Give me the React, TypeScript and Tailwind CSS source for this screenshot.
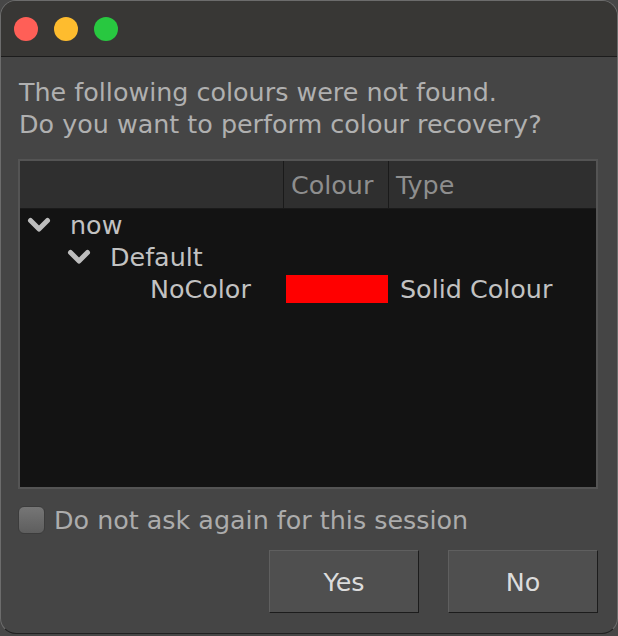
import React from "react";

// Dialog rows: tree of palettes -> pages -> missing colours
type Row = {
  level: number;
  label: string;
  expandable?: boolean;
  colour?: string;
  type?: string;
};

const rows: Row[] = [
  { level: 0, label: "now", expandable: true },
  { level: 1, label: "Default", expandable: true },
  { level: 2, label: "NoColor", colour: "#ff0000", type: "Solid Colour" },
];

function Chevron() {
  return (
    <svg width="24" height="16" viewBox="0 0 24 16" className="shrink-0">
      <polyline
        points="3.5,3.5 12,12 20.5,3.5"
        fill="none"
        stroke="#bdbdbd"
        strokeWidth="5"
        strokeLinecap="round"
        strokeLinejoin="round"
      />
    </svg>
  );
}

export default function App() {
  return (
    <div
      className="w-[618px] h-[636px] bg-[#474747] text-[25.4px] leading-[32px]"
      style={{ fontFamily: '"DejaVu Sans", "Liberation Sans", sans-serif' }}
    >
      <div className="h-[634px] rounded-[16px] border border-[#6c6c6c] border-b-[#202020] overflow-hidden flex flex-col bg-[#454545]">
        {/* title bar */}
        <div className="h-[56px] shrink-0 bg-[#383735] border-b border-[#1c1c1c] flex items-center gap-[16px] pl-[13px]">
          <span className="w-[24px] h-[24px] rounded-full bg-[#ff5f57]" />
          <span className="w-[24px] h-[24px] rounded-full bg-[#febc2e]" />
          <span className="w-[24px] h-[24px] rounded-full bg-[#28c840]" />
        </div>

        <div className="flex flex-col pl-[17px] pr-[19px] pt-[19px]">
          <p className="text-[#b0b0b0] pl-px">
            The following colours were not found.
            <br />
            Do you want to perform colour recovery?
          </p>

          {/* table */}
          <div className="mt-[19px] h-[330px] border-2 border-[#545454] bg-[#131313] flex flex-col">
            <div className="h-[48px] shrink-0 bg-[#2f2f2f] border-b border-[#1a1a1a] flex text-[#8e8e8e]">
              <div className="w-[264px] border-r border-[#1a1a1a]" />
              <div className="w-[105px] border-r border-[#1a1a1a] pl-[7px] flex items-center">Colour</div>
              <div className="flex-1 pl-[7px] flex items-center">Type</div>
            </div>
            <div className="flex flex-col text-[#c2c2c2]">
              {rows.map((r) => (
                <div key={r.label} className="h-[32px] flex items-center">
                  <div className="w-[265px] flex items-center pl-[7px]">
                    <div style={{ width: r.level * 40 }} className="shrink-0" />
                    <div className="w-[43px] shrink-0 flex items-center">
                      {r.expandable && <Chevron />}
                    </div>
                    <span>{r.label}</span>
                  </div>
                  <div className="w-[105px] h-full flex items-center pl-px pr-px">
                    {r.colour && (
                      <div className="w-[102px] h-[28px]" style={{ background: r.colour }} />
                    )}
                  </div>
                  <div className="flex-1 pl-[10px]">{r.type}</div>
                </div>
              ))}
            </div>
          </div>

          {/* checkbox */}
          <label className="mt-[15px] flex items-center gap-[9px] text-[#acacac]">
            <span className="w-[27px] h-[28px] rounded-[6px] border border-[#3c3c3c] bg-gradient-to-b from-[#767676] to-[#5e5e5e]" />
            Do not ask again for this session
          </label>

          {/* buttons */}
          <div className="mt-[14px] flex justify-end gap-[29px]">
            <button className="w-[150px] h-[63px] bg-[#4f4f4f] border border-[#5f5f5f] border-b-[#1c1c1c] border-r-[#1c1c1c] text-[#dcdcdc]">
              Yes
            </button>
            <button className="w-[150px] h-[63px] bg-[#4f4f4f] border border-[#5f5f5f] border-b-[#1c1c1c] border-r-[#1c1c1c] text-[#dcdcdc]">
              No
            </button>
          </div>
        </div>
      </div>
    </div>
  );
}
